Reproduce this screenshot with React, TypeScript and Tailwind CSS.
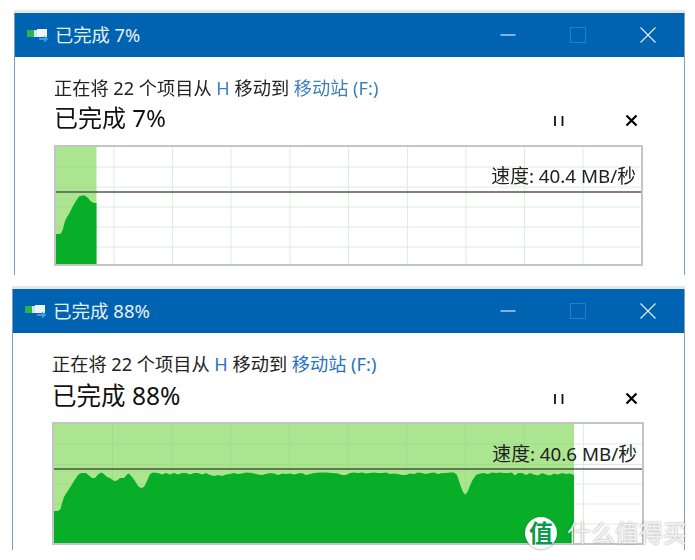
const FONT = "font-['Noto_Sans','Noto_Sans_CJK_SC',sans-serif]";

type Pt = [number, number];

const AREA_A: Pt[] = [
  [0, 87], [3, 87], [5, 86.5], [7, 82], [9, 74], [11, 70], [13, 67], [15, 63], [17, 59], [20, 54], [23, 49.5],
  [26, 48.5], [29, 48.5], [32, 51], [35, 54.5], [38, 56], [40.5, 56],
];

const AREA_B: Pt[] = [
  [0, 87], [4, 87], [6.5, 85], [8, 79], [10, 73], [13, 68], [16, 63.5], [20, 57], [24, 51], [27, 49], [32, 49],
  [35, 51.5], [38, 54], [41, 54], [44, 50.5], [47, 48.5], [50, 50], [53, 53], [56, 54], [60, 57], [63, 56.5], [66, 54],
  [70, 54], [73, 50.5], [75, 49.5], [78, 53], [81, 57], [84, 62], [87, 64], [90, 63], [93, 57], [96, 50], [99, 48.5],
  [104, 49], [108, 50.5], [112, 49], [116, 50.5], [120, 49], [124, 50.5], [128, 49], [132, 49], [136, 50.5], [140, 49],
  [144, 49], [148, 50.5], [152, 49], [156, 51], [160, 52], [164, 51], [168, 52], [172, 50.5], [176, 50], [180, 49], [184, 50],
  [188, 49.5], [192, 48.5], [198, 49], [204, 50.5], [208, 51], [212, 50], [216, 49], [220, 49.5], [224, 51], [228, 49.5],
  [232, 50], [236, 49.5], [240, 50.5], [244, 49.5], [248, 49], [252, 51], [256, 50], [260, 49], [266, 48.5], [272, 48.5],
  [278, 49], [284, 49.5], [288, 51], [292, 51], [296, 49], [300, 48.5], [304, 49], [308, 48.5], [312, 49.5], [316, 49],
  [320, 48.5], [324, 49], [328, 49], [332, 48.5], [336, 50], [340, 49.5], [344, 50], [348, 51], [352, 51], [356, 49.5],
  [360, 50], [364, 48.5], [368, 49], [372, 50], [376, 49], [380, 48.5], [384, 50], [388, 49], [392, 49], [396, 48.5],
  [400, 48.5], [403, 51], [405, 57], [407, 63], [409, 68], [411, 70.5], [413, 69], [415, 64], [418, 57], [422, 51],
  [426, 49.5], [430, 49], [434, 50], [438, 48.5], [442, 49], [446, 48.5], [450, 49], [454, 49], [458, 48.5], [461, 51.5],
  [464, 49], [468, 49], [472, 51], [476, 49], [480, 50.5], [484, 51.5], [488, 49], [492, 50.5], [496, 51.5], [500, 49.5], [504, 50.5],
  [508, 49], [512, 50], [516, 49.5], [520, 51],
];

function Chart(props: { w: number; h: number; cols: number[]; rows: number[]; line: number; fillW: number; area: Pt[]; lineColor: string; lineW: number; lightOnGrid: string }) {
  const { w, h, cols, rows, line, fillW, area, lineColor, lineW, lightOnGrid } = props;
  const pts = `0,${h} ` + area.map(([x, y]) => `${x},${y}`).join(" ") + ` ${fillW},${h}`;
  return (
    <svg width={w} height={h} viewBox={`0 0 ${w} ${h}`} className="block">
      {rows.map((y) => <line key={y} x1={0} x2={w} y1={y} y2={y} stroke="#d9efe2" strokeWidth="1" />)}
      {cols.map((x) => <line key={x} x1={x} x2={x} y1={0} y2={h} stroke="#d9efe2" strokeWidth="1" />)}
      <rect x={0} y={0} width={fillW} height={h} fill="#ace590" />
      {rows.map((y) => <line key={y} x1={0} x2={fillW} y1={y} y2={y} stroke={lightOnGrid} strokeWidth="1" />)}
      {cols.filter((x) => x < fillW).map((x) => <line key={x} x1={x} x2={x} y1={0} y2={h} stroke={lightOnGrid} strokeWidth="1" />)}
      <polygon points={pts} fill="#08ae27" />
      <line x1={0} x2={w} y1={line} y2={line} stroke={lineColor} strokeWidth={lineW} />
    </svg>
  );
}

function CopyIcon() {
  return (
    <svg width="22" height="16" viewBox="0 0 22 16" className="shrink-0">
      <rect x="0" y="3" width="7" height="7" fill="#2fb34a" />
      <rect x="7" y="3" width="6" height="7" fill="#cfe3ee" />
      <path d="M10 2h10v8H10z" fill="#eef4f8" />
      <path d="M12 11h5V8.500l4.500 3.500-4.500 3.500V13h-5z" fill="#3f9be8" />
    </svg>
  );
}

function CaptionButtons() {
  return (
    <div className="flex items-center gap-[54px] pr-[28px]">
      <svg width="16" height="16" viewBox="0 0 16 16"><line x1="0.500" x2="15.500" y1="8" y2="8" stroke="#dce9f5" strokeWidth="1.200" /></svg>
      <svg width="16" height="16" viewBox="0 0 16 16"><rect x="0.500" y="0.500" width="15" height="15" fill="none" stroke="#2a7cc4" /></svg>
      <svg width="16" height="16" viewBox="0 0 16 16"><path d="M0.500 0.500l15 15M15.500 0.500l-15 15" stroke="#e8f1f9" strokeWidth="1.100" fill="none" /></svg>
    </div>
  );
}

function ActionButtons() {
  return (
    <div className="flex items-center gap-[60px] pr-[6px] pt-[5px]">
      <svg width="12" height="12" viewBox="0 0 12 12"><path d="M2 1v10M9.500 1v10" stroke="#111" strokeWidth="1.800" /></svg>
      <svg width="13" height="13" viewBox="0 0 13 13"><path d="M1.500 1.500l10 10M11.500 1.500l-10 10" stroke="#000" strokeWidth="2.200" /></svg>
    </div>
  );
}

function CopyWindow(props: {
  percent: string; speed: string; outer: string; linkColor: string; headSize: string; children: React.ReactNode; graphBox: string; headGap: string; speedTop: string; titleSize: string;
}) {
  const { percent, speed, outer, linkColor, headSize, children, graphBox, headGap, speedTop, titleSize } = props;
  return (
    <div className={`${outer} flex flex-col overflow-hidden border-x border-x-[#7f9db9] bg-white shadow-[0_-3px_0_#e4e6e8]`}>
      <div className="flex h-[44px] shrink-0 items-center justify-between bg-[#0063b1] pl-[12px]">
        <div className="flex items-center gap-[6px]">
          <CopyIcon />
          <span className={`${titleSize} leading-none text-[#e6f0f8]`}>已完成 {percent}</span>
        </div>
        <CaptionButtons />
      </div>
      <div className="flex flex-col pl-[39px] pr-[40px] pt-[20px]">
        <div className="text-[18.2px] leading-[22px] text-[#222]">
          正在将 22 个项目从 <span className={linkColor}>H</span> 移动到 <span className={linkColor}>移动站 (F:)</span>
        </div>
        <div className={`flex items-center justify-between ${headGap}`}>
          <span className={`${headSize} leading-[30px] text-[#111]`}>已完成 {percent}</span>
          <ActionButtons />
        </div>
        <div className={`relative ${graphBox} border-2 border-[#c4c4c4]`}>
          {children}
          <span className={`absolute right-[5px] ${speedTop} whitespace-nowrap text-[18.8px] leading-[22px] text-[#222]`}>速度: {speed}</span>
        </div>
      </div>
    </div>
  );
}

const COLS_A = [58, 116.500, 175, 234, 292.500, 351.500, 410, 468.500, 527];
const COLS_B = [58.500, 117.500, 176.500, 235.500, 294.500, 352.500, 411.500, 470, 529.500];

export default function App() {
  return (
    <div className={`${FONT} relative h-[560px] w-[695px] overflow-hidden bg-white pt-[13px]`}>
      <CopyWindow
        percent="7%"
        speed="40.4 MB/秒"
        outer="ml-[14px] h-[262px] w-[671px] blur-[0.35px]"
        linkColor="text-[#3f7fb8]"
        headSize="text-[24px]"
        titleSize="text-[18.3px]"
        graphBox="mt-[12px] h-[121px] w-[589px]"
        headGap="mt-[4px]"
        speedTop="top-[18px]"
      >
        <Chart w={585} h={117} cols={COLS_A} rows={[20, 40, 60, 80, 100]} line={45} fillW={40.500} area={AREA_A} lineColor="#555" lineW={1.500} lightOnGrid="#a2dc8a" />
      </CopyWindow>
      <div className="mt-[14px]">
        <CopyWindow
          percent="88%"
          speed="40.6 MB/秒"
          outer="ml-[12px] h-[261px] w-[673px]"
          linkColor="text-[#2a72c0]"
          headSize="text-[24.500px]"
          titleSize="text-[18.5px]"
          graphBox="mt-[11px] h-[123px] w-[592px]"
          headGap="mt-[6px]"
          speedTop="top-[19px]"
        >
          <Chart w={588} h={119} cols={COLS_B} rows={[20, 40.500, 60, 80, 100]} line={45} fillW={520} area={AREA_B} lineColor="#111" lineW={1.200} lightOnGrid="#a0dc8c" />
        </CopyWindow>
      </div>
      <div className="absolute left-[525px] top-[517px] flex items-center gap-[10px]">
        <div className="flex h-[32px] w-[32px] items-center justify-center rounded-full bg-white text-[24px] font-bold leading-none text-[#0a9a4a] shadow-[0_1px_2px_rgba(0,0,0,0.25)]">值</div>
        <span className="whitespace-nowrap text-[24px] leading-none text-white/85 [text-shadow:0_0_2px_rgba(0,0,0,0.45)]">什么值得买</span>
      </div>
    </div>
  );
}
